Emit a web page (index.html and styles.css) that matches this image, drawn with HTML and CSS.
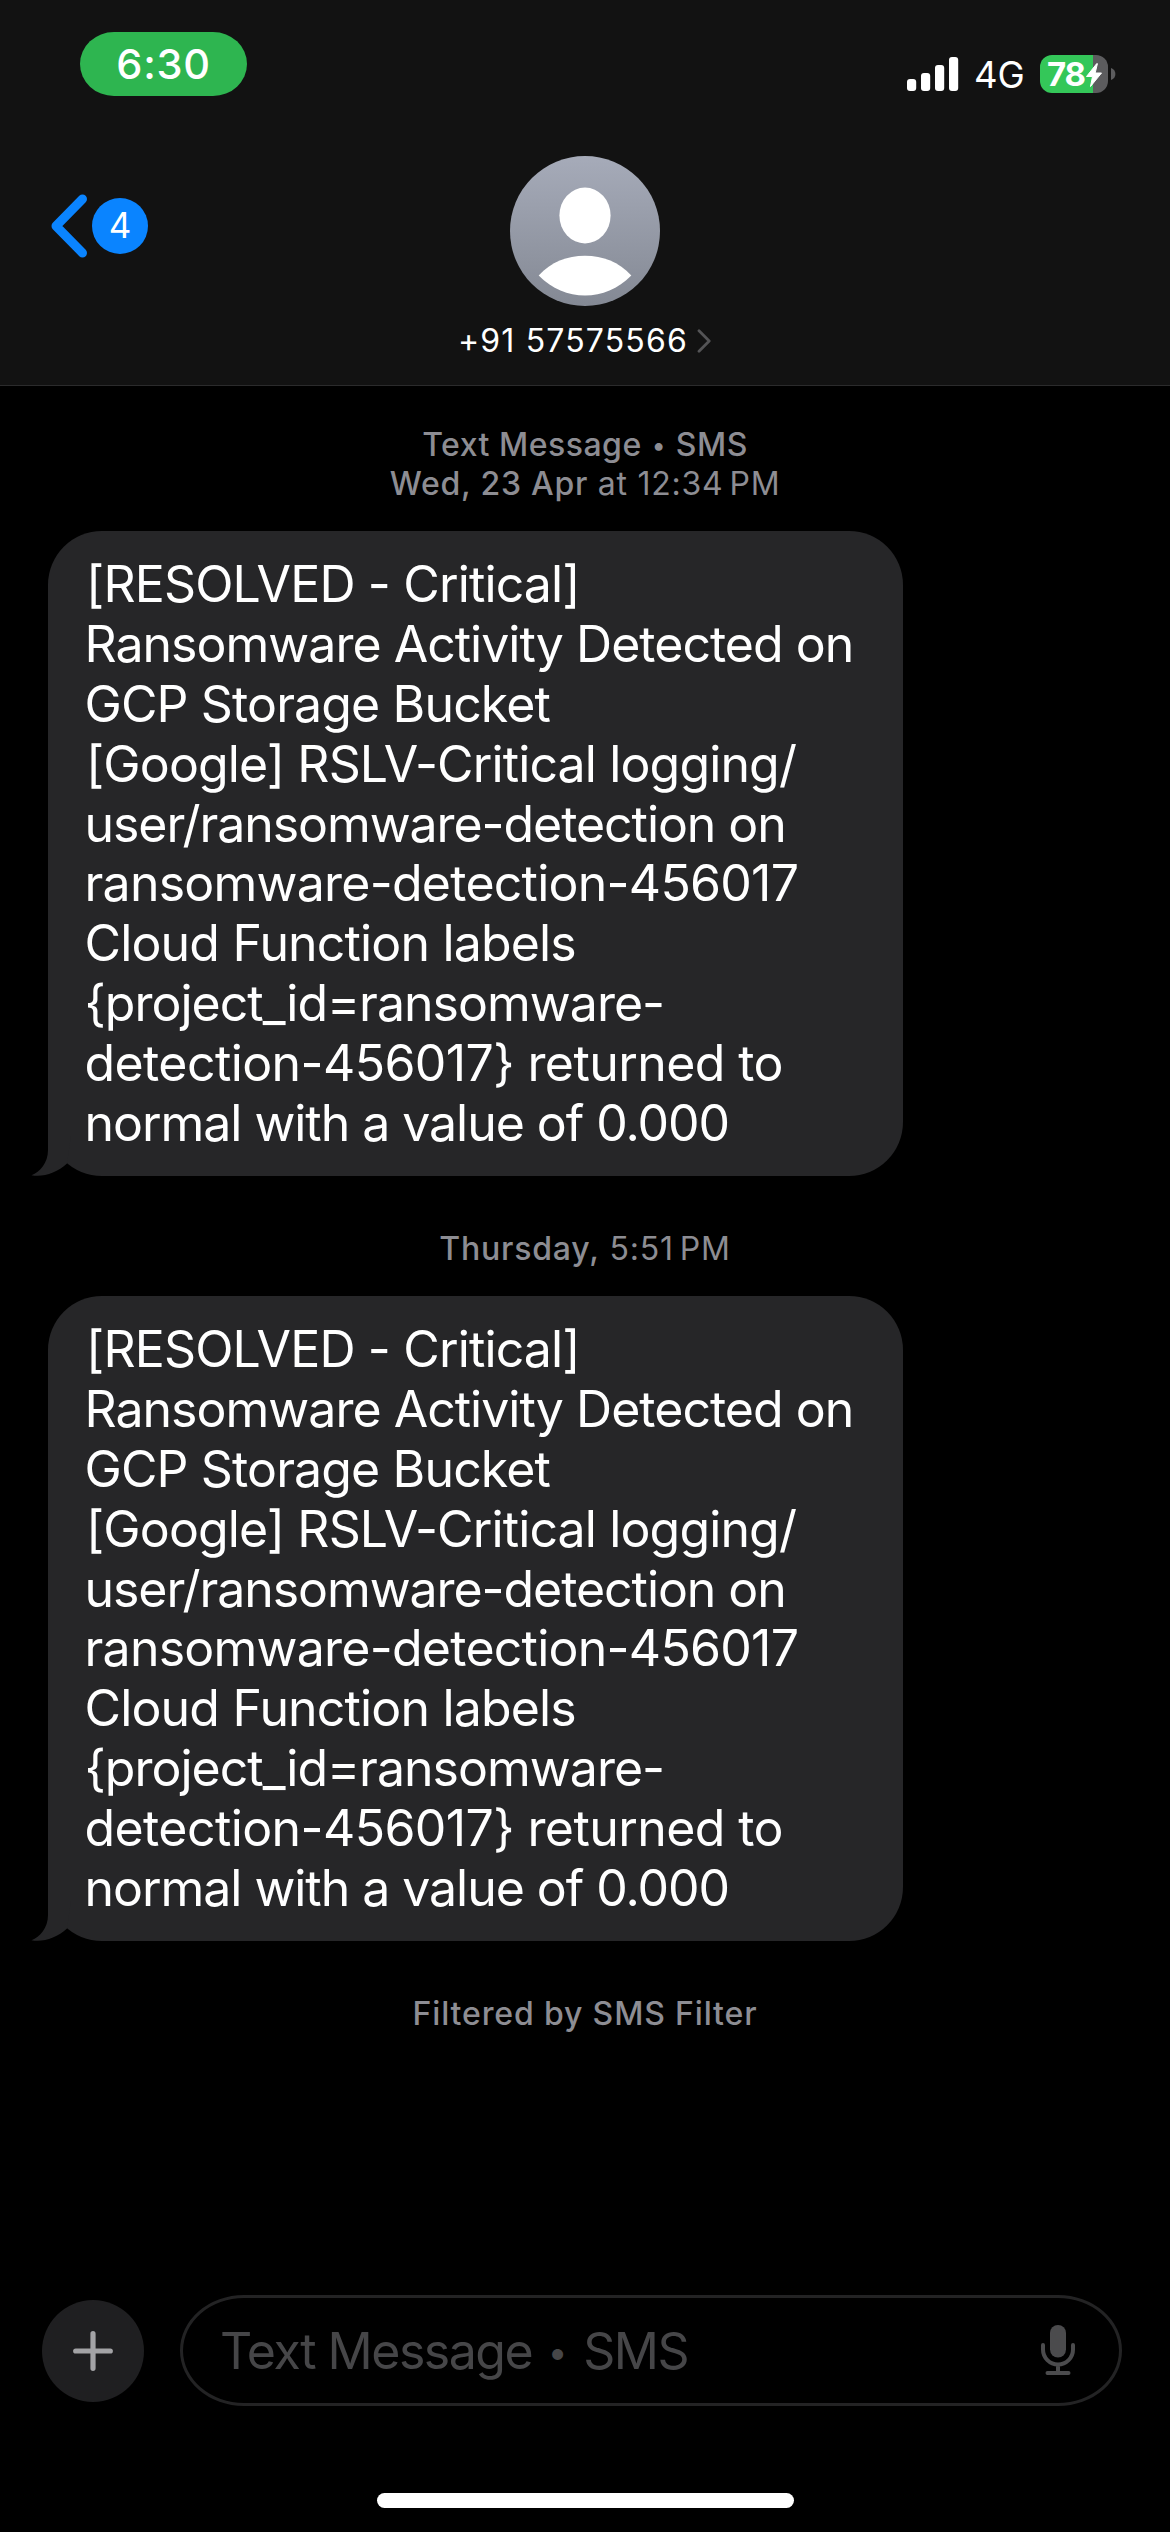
FILE: index.html
```html
<!DOCTYPE html>
<html lang="en">
<head>
<meta charset="utf-8">
<title>Messages</title>
<link rel="stylesheet" href="styles.css">
</head>
<body>
<main class="screen">
  <header class="top">
    <div class="status">
      <div class="clock"><span>6:30</span></div>
      <div class="indicators">
        <svg class="signal" width="52" height="34" viewBox="0 0 52 34" fill="#fff">
          <rect x="0" y="22" width="9.200" height="12" rx="3"/>
          <rect x="14" y="16" width="9.200" height="18" rx="3"/>
          <rect x="28" y="8" width="9.200" height="26" rx="3"/>
          <rect x="42" y="0" width="9.200" height="34" rx="3"/>
        </svg>
        <span class="network">4G</span>
        <div class="battery">
          <span class="level">78</span>
          <svg class="bolt" width="18" height="26" viewBox="0 0 18 26"><path d="M11.800 1.500 1.500 14.500h6L5.500 24.500 16.500 11h-6.300L12.400 1.700z" fill="#fff" stroke="#fff" stroke-width="1" stroke-linejoin="round"/></svg>
        </div>
        <svg class="nub" width="5" height="12" viewBox="0 0 5 12"><path d="M0 0q4.400 1.600 4.400 6T0 12z" fill="#5c5c5e"/></svg>
      </div>
    </div>
    <div class="nav">
      <div class="back">
        <svg width="37" height="64" viewBox="0 0 37 64"><path d="M31.500 5 5 32 31.500 59" fill="none" stroke="#0a84ff" stroke-width="9" stroke-linecap="round" stroke-linejoin="round"/></svg>
        <span class="unread">4</span>
      </div>
      <div class="contact">
        <svg class="avatar" width="150" height="150" viewBox="0 0 150 150">
          <defs><linearGradient id="avatar" x1="0" y1="0" x2="0" y2="1"><stop offset="0" stop-color="#a6abb9"/><stop offset="1" stop-color="#848994"/></linearGradient></defs>
          <circle cx="75" cy="75" r="75" fill="url(#avatar)"/>
          <ellipse cx="75" cy="59.500" rx="25.600" ry="28" fill="#fff"/>
          <path d="M28.700 119.500C41 106 57 99.800 75 99.800s34 6.200 46.300 19.700C108 133 92 139.500 75 139.500S42 133 28.700 119.500z" fill="#fff"/>
        </svg>
        <div class="number"><span>+91 57575566</span>
          <svg width="15" height="24" viewBox="0 0 15 24"><path d="M2 1.800 12.200 12 2 22.200" fill="none" stroke="#545456" stroke-width="2.800" stroke-linecap="round" stroke-linejoin="round"/></svg>
        </div>
      </div>
    </div>
  </header>

  <section class="thread">
    <div class="stamp intro"><span class="kind"><b>Text Message <span class="dot">•</span> SMS</b></span><span class="date"><b>Wed, 23 Apr</b> at 12:34<i></i>PM</span></div>
    <div class="bubble">
      <p>[RESOLVED - Critical]</p>
      <p>Ransomware Activity Detected on</p>
      <p>GCP Storage Bucket</p>
      <p>[Google] RSLV-Critical logging/</p>
      <p>user/ransomware-detection on</p>
      <p>ransomware-detection-456017</p>
      <p>Cloud Function labels</p>
      <p>{project_id=ransomware-</p>
      <p>detection-456017} returned to</p>
      <p>normal with a value of 0.000</p>
      <svg class="tail" width="46" height="70" viewBox="0 0 46 70"><path d="M17 0V44C17 57 9 66 .5 69.300 12 71.500 26 67 36 57.600L40 30V0z" fill="#262628"/></svg>
    </div>
    <div class="stamp"><span class="day"><b>Thursday,</b> 5:51<i></i>PM</span></div>
    <div class="bubble">
      <p>[RESOLVED - Critical]</p>
      <p>Ransomware Activity Detected on</p>
      <p>GCP Storage Bucket</p>
      <p>[Google] RSLV-Critical logging/</p>
      <p>user/ransomware-detection on</p>
      <p>ransomware-detection-456017</p>
      <p>Cloud Function labels</p>
      <p>{project_id=ransomware-</p>
      <p>detection-456017} returned to</p>
      <p>normal with a value of 0.000</p>
      <svg class="tail" width="46" height="70" viewBox="0 0 46 70"><path d="M17 0V44C17 57 9 66 .5 69.300 12 71.500 26 67 36 57.600L40 30V0z" fill="#262628"/></svg>
    </div>
    <div class="stamp"><span class="filter"><b>Filtered by SMS Filter</b></span></div>
  </section>

  <footer class="composer">
    <div class="plus">
      <svg width="40" height="40" viewBox="0 0 40 40"><path d="M20 2.700v34.600M2.700 20h34.600" stroke="#a3a3a6" stroke-width="5.200" stroke-linecap="round"/></svg>
    </div>
    <div class="field">
      <span class="placeholder">Text Message <span class="dot">•</span> SMS</span>
      <svg width="36" height="51" viewBox="0 0 36 51">
        <rect x="10" y="0" width="16" height="32.500" rx="8" fill="#4b4b4d"/>
        <path d="M3 20v4.500a15 15 0 0 0 30 0V20M18 40v8M7.500 48h21" fill="none" stroke="#4b4b4d" stroke-width="4" stroke-linecap="round"/>
      </svg>
    </div>
  </footer>
  <div class="home"></div>
</main>
</body>
</html>
```
FILE: styles.css
```css
* { box-sizing: border-box; }

body {
  margin: 0;
  background: #000;
  color: #fff;
  font-family: Inter, "Liberation Sans", sans-serif;
}

.screen {
  display: flex;
  flex-direction: column;
  width: 1170px;
  height: 2532px;
  overflow: hidden;
}

/* Header */
.top {
  flex: none;
  height: 386px;
  background: #121212;
  border-bottom: 1px solid #2b2b2c;
}

.status {
  display: flex;
  justify-content: space-between;
  height: 156px;
  padding: 32px 54px 0 80px;
}

.clock {
  display: flex;
  align-items: center;
  justify-content: center;
  width: 167px;
  height: 64px;
  border-radius: 34px / 32px;
  background: #2eb550;
  font-size: 41.500px;
  font-weight: 500;
  letter-spacing: 0.700px;
}

.indicators {
  display: flex;
  align-items: center;
  height: 38px;
  margin-top: 23px;
}

.signal { margin-right: 15px; }

.network {
  width: 66px;
  font-size: 36.500px;
  line-height: 38px;
  padding-top: 2px;
}

.battery {
  display: flex;
  align-items: center;
  width: 68px;
  height: 38px;
  padding-left: 7px;
  border-radius: 12px;
  background: linear-gradient(90deg, #34c759 53px, #5c5c5e 53px);
}

.level {
  width: 38px;
  font-size: 33px;
  font-weight: 700;
  line-height: 38px;
  letter-spacing: -1.200px;
}

.bolt { margin-top: 1px; }
.nub { margin-left: 3px; }

.nav {
  display: grid;
  grid-template-columns: 1fr auto 1fr;
}

.back {
  display: flex;
  align-items: center;
  gap: 4px;
  height: 64px;
  margin: 38px 0 0 51px;
}

.unread {
  width: 56px;
  height: 56px;
  border-radius: 50%;
  background: #0a84ff;
  font-size: 35px;
  line-height: 55px;
  text-align: center;
}

.contact {
  display: flex;
  flex-direction: column;
  align-items: center;
}

.number {
  display: flex;
  align-items: center;
  gap: 9px;
  margin-top: 15px;
  font-size: 32px;
  line-height: 39px;
  letter-spacing: 1.150px;
}

/* Thread */
.thread {
  flex: 1;
  padding: 39px 48px 0;
}

.stamp {
  display: flex;
  flex-direction: column;
  align-items: center;
  margin: 53px 0 28px;
  color: #8d8d93;
  font-size: 32px;
  line-height: 39px;
  white-space: pre;
}

.stamp.intro { margin-top: 0; }
.stamp b { font-weight: 550; }
.stamp i { display: inline-block; width: 6px; }
.stamp .dot { width: 16px; font-size: 25px; vertical-align: 2px; }
.kind { letter-spacing: 0.500px; }
.date { letter-spacing: 0.750px; }
.day { letter-spacing: 0.800px; }
.filter { letter-spacing: 0.850px; }

.dot {
  display: inline-flex;
  justify-content: center;
  line-height: 0;
  letter-spacing: 0;
}

.bubble {
  position: relative;
  z-index: 0;
  width: 855px;
  height: 645px;
  padding: 24px 0 0 36.500px;
  border-radius: 54px;
  background: #262628;
  font-size: 50px;
  line-height: 59.870px;
}

.bubble p { margin: 0; white-space: pre; letter-spacing: -0.870px; }
.bubble p:nth-child(1) { padding-left: 1.500px; letter-spacing: -0.850px; }
.bubble p:nth-child(2) { letter-spacing: -0.980px; }
.bubble p:nth-child(4) { padding-left: 1.500px; }
.bubble p:nth-child(5) { letter-spacing: -1.060px; }
.bubble p:nth-child(6) { letter-spacing: -0.750px; }
.bubble p:nth-child(7) { letter-spacing: -0.830px; }
.bubble p:nth-child(8) { letter-spacing: -0.980px; }
.bubble p:nth-child(9) { letter-spacing: -0.590px; }
.bubble p:nth-child(10) { letter-spacing: -1.040px; }

.tail {
  position: absolute;
  z-index: -1;
  left: -17px;
  bottom: 0;
}

/* Composer */
.composer {
  flex: none;
  display: flex;
  align-items: center;
  gap: 36px;
  height: 111px;
  padding: 0 48px 0 42px;
}

.plus {
  display: flex;
  align-items: center;
  justify-content: center;
  width: 102px;
  height: 102px;
  border-radius: 50%;
  background: #1f1f21;
}

.field {
  flex: 1;
  display: flex;
  align-items: center;
  justify-content: space-between;
  height: 111px;
  padding: 0 43px 0 37px;
  border: 3px solid #232324;
  border-radius: 64px / 55.500px;
}

.placeholder {
  color: #464648;
  font-size: 50px;
  letter-spacing: -1.500px;
  white-space: pre;
}

.placeholder .dot {
  width: 26px;
  font-size: 35px;
  vertical-align: 4px;
}

.home {
  flex: none;
  width: 417px;
  height: 15px;
  margin: 87px auto 24px;
  border-radius: 8px;
  background: #fff;
}
```
